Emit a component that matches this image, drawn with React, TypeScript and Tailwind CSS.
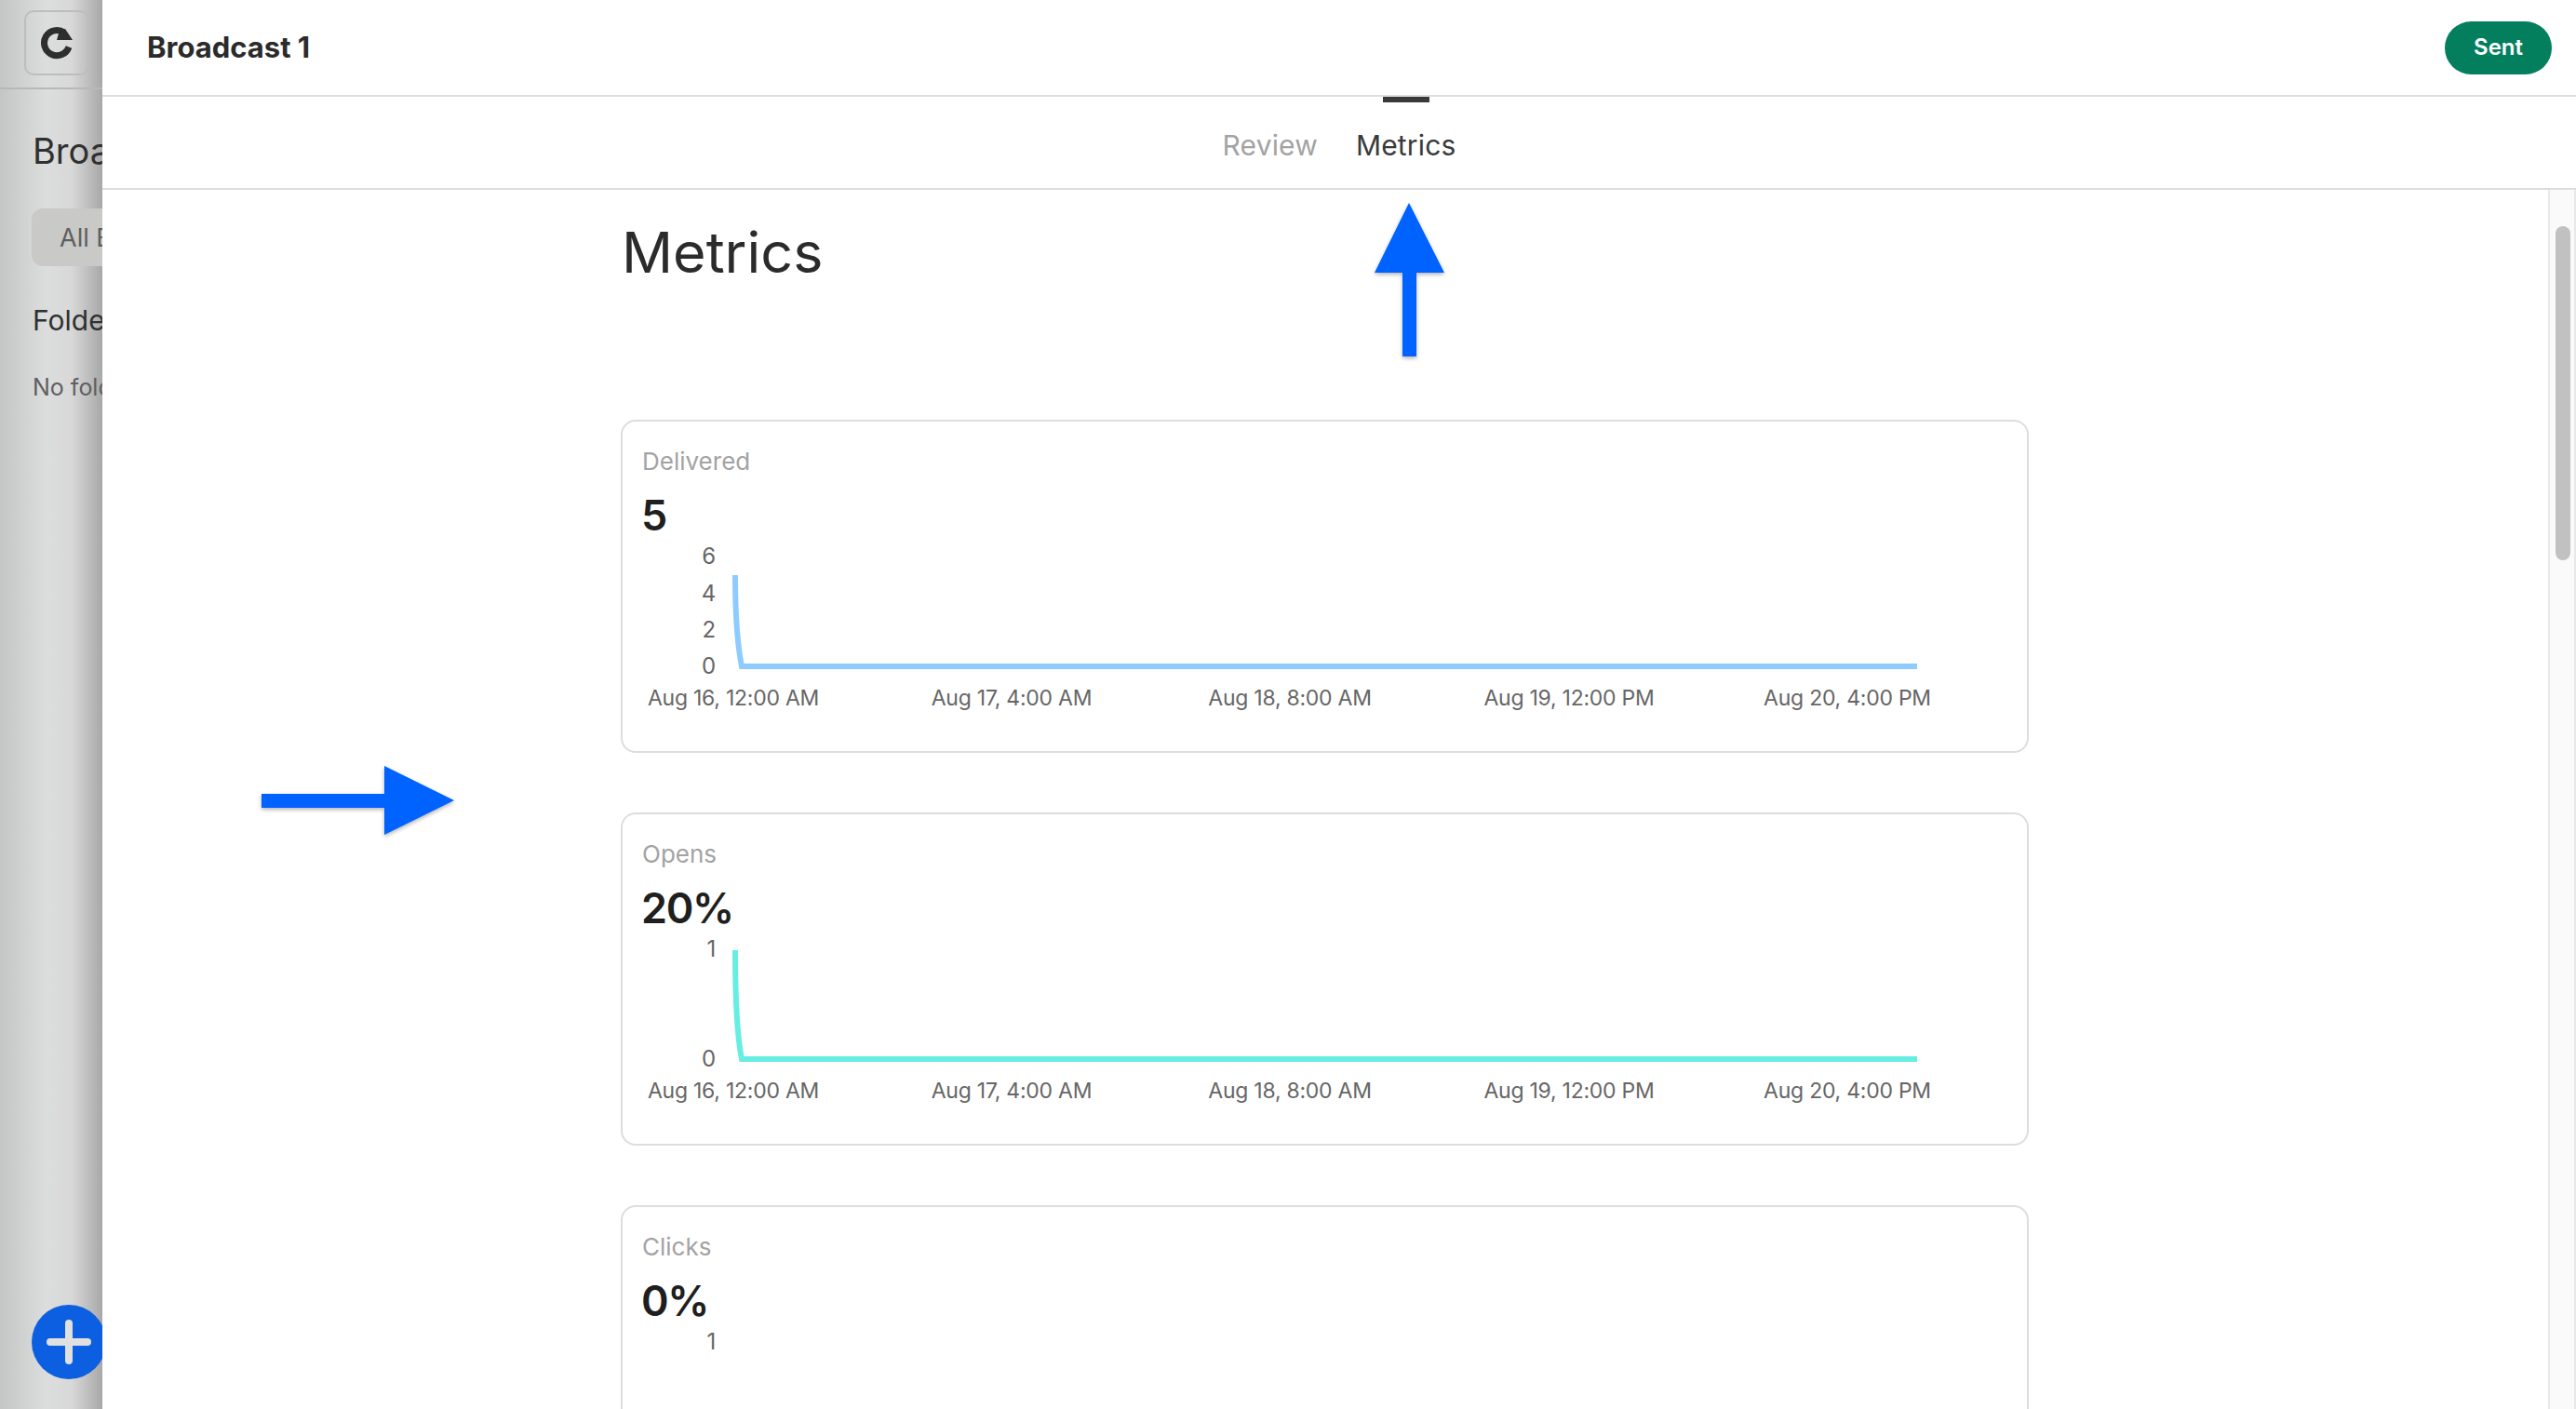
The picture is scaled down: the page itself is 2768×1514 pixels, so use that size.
const font = "font-['Inter','Liberation_Sans',sans-serif]";

const charts = [
  {
    label: "Delivered",
    value: "5",
    color: "#8ecbff",
    ticks: [
      { text: "6", y: 16 },
      { text: "4", y: 56 },
      { text: "2", y: 95 },
      { text: "0", y: 134 },
    ],
    path: "M99 37 C99 75 101 110 106 135 L1369 135",
  },
  {
    label: "Opens",
    value: "20%",
    color: "#66eee3",
    ticks: [
      { text: "1", y: 16 },
      { text: "0", y: 134 },
    ],
    path: "M99 18 C99 65 101 110 106 135 L1369 135",
  },
  {
    label: "Clicks",
    value: "0%",
    color: "#8ecbff",
    ticks: [
      { text: "1", y: 16 },
      { text: "0", y: 134 },
    ],
    path: "M99 135 L1369 135",
  },
];

const dates = [
  { text: "Aug 16, 12:00 AM", x: 97 },
  { text: "Aug 17, 4:00 AM", x: 396 },
  { text: "Aug 18, 8:00 AM", x: 695 },
  { text: "Aug 19, 12:00 PM", x: 995 },
  { text: "Aug 20, 4:00 PM", x: 1294 },
];

function MetricCard({ chart }: { chart: (typeof charts)[number] }) {
  return (
    <div className="w-[1513px] h-[358px] shrink-0 rounded-[16px] border-2 border-[#dddddd] bg-white pt-[24px]">
      <div className="pl-[21px] text-[26px] leading-[38px] text-[#a3a3a3]">{chart.label}</div>
      <div className="mt-[11px] pl-[20px] text-[45px] leading-[56px] font-semibold tracking-[-0.03em] text-[#1f1f1f]">
        {chart.value}
      </div>
      <svg className="-mt-[1px] ml-[22px] block tracking-[-0.25px]" width="1464" height="224" viewBox="0 0 1464 224">
        {chart.ticks.map((t) => (
          <text key={t.text} x="78" y={t.y + 9} textAnchor="end" fontSize="24" fill="#666666">
            {t.text}
          </text>
        ))}
        <path d={chart.path} fill="none" stroke={chart.color} strokeWidth="6" />
        {dates.map((d) => (
          <text key={d.text} x={d.x} y="177" textAnchor="middle" fontSize="23" fill="#666666">
            {d.text}
          </text>
        ))}
      </svg>
    </div>
  );
}

export default function App() {
  return (
    <div className={`relative flex h-[1514px] w-[2768px] overflow-hidden bg-white ${font}`}>
      {/* page behind the drawer */}
      <div className="h-full w-[110px] shrink-0 overflow-hidden bg-[linear-gradient(90deg,#c4c6c6_0%,#dcdddd_45%,#d8d8d8_70%,#a8a8a8_100%)]">
        <div className="h-[96px] w-[400px] border-b-2 border-[#b8b8b8] pl-[26px] pt-[11px]">
          <div className="flex h-[70px] w-[70px] items-center justify-center rounded-[10px] border-2 border-[#bdbdbd]">
            <svg width="36" height="36" viewBox="0 0 36 36">
              <path d="M31 22.5 A13.6 13.6 0 1 1 26 7" fill="none" stroke="#2e2e2e" strokeWidth="7" />
              <path d="M18 15 H35 L27 3 L20 8 Z" fill="#2e2e2e" />
            </svg>
          </div>
        </div>
        <div className="w-[400px] pl-[35px] pt-[43px]">
          <div className="text-[38px] leading-[46px] text-[#303030]">Broadcasts</div>
          <div className="-ml-[1px] mt-[39px] flex h-[62px] w-[300px] items-center rounded-[12px] bg-[#c9c9c7] pl-[30px] pt-[2px] text-[27px] text-[#5f5f5f]">
            All Broadcasts
          </div>
          <div className="mt-[38px] text-[30px] leading-[40px] text-[#303030]">Folders</div>
          <div className="mt-[36px] text-[25px] leading-[32px] text-[#5f5f5f]">No folders yet</div>
        </div>
      </div>

      {/* drawer */}
      <div className="flex h-full min-w-0 flex-1 flex-col bg-white">
        <div className="flex h-[104px] shrink-0 items-center justify-between border-b-2 border-[#dddddd] pl-[48px] pr-[26px]">
          <div className="text-[31px] font-bold text-[#2b2b2b]">Broadcast 1</div>
          <div className="flex h-[57px] w-[115px] items-center justify-center rounded-full bg-[#047f5e] text-[24px] font-semibold text-white">
            Sent
          </div>
        </div>
        <div className="flex h-[100px] shrink-0 justify-center gap-[41px] border-b-2 border-[#dddddd] tracking-[0.01em]">
          <div className="pt-[34px] text-[30px] leading-[36px] text-[#a3a3a3]">Review</div>
          <div className="flex flex-col items-center">
            <div className="h-[6px] w-[50px] bg-[#3a3a3a]" />
            <div className="pt-[28px] text-[30px] leading-[36px] text-[#3a3a3a]">Metrics</div>
          </div>
        </div>
        <div className="flex min-h-0 flex-1">
          <div className="min-w-0 flex-1 overflow-hidden pl-[557px]">
            <h1 className="pl-[1px] pt-[29px] text-[61px] leading-[76px] text-[#2b2b2b]">Metrics</h1>
            <div className="mt-[142px] flex flex-col gap-[64px]">
              {charts.map((c) => (
                <MetricCard key={c.label} chart={c} />
              ))}
            </div>
          </div>
          <div className="w-[30px] shrink-0 border-x-2 border-[#e8e8e8] bg-[#fafafa] pl-[6px] pt-[39px]">
            <div className="h-[359px] w-[16px] rounded-full bg-[#c1c1c1]" />
          </div>
        </div>
      </div>

      {/* add button, overlaps the drawer edge and gets clipped by it */}
      <div className="absolute left-[34px] top-[1402px] h-[80px] w-[76px] overflow-hidden">
        <div className="flex h-[80px] w-[80px] items-center justify-center rounded-full bg-[#0c5fe0]">
          <svg width="48" height="48" viewBox="0 0 48 48">
            <path d="M24 4 V44 M4 24 H44" stroke="#e0e0e0" strokeWidth="8" strokeLinecap="round" />
          </svg>
        </div>
      </div>

      {/* annotation arrows */}
      <svg className="absolute left-[1470px] top-[212px] drop-shadow-[0_2px_2px_rgba(0,0,0,0.3)]" width="90" height="176" viewBox="0 0 90 176">
        <path d="M44 6 L82 81 H52 V171 H37 V81 H7 Z" fill="#0062ff" />
      </svg>
      <svg className="absolute left-[276px] top-[818px] drop-shadow-[0_2px_2px_rgba(0,0,0,0.3)]" width="218" height="84" viewBox="0 0 218 84">
        <path d="M5 35 H137 V5 L212 42 L137 79 V50 H5 Z" fill="#0062ff" />
      </svg>
    </div>
  );
}
